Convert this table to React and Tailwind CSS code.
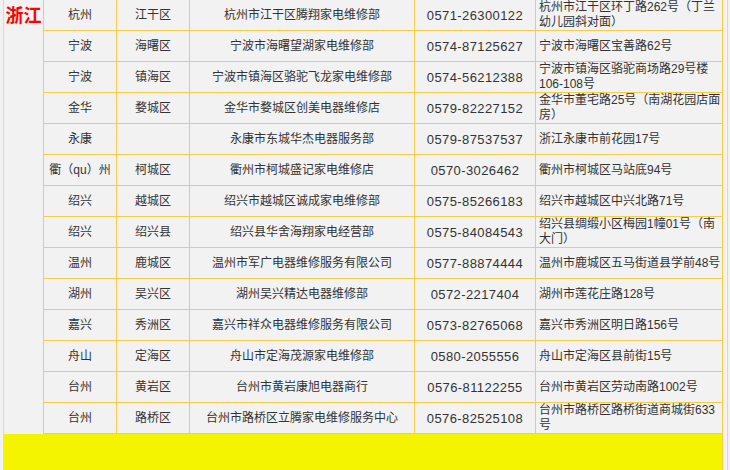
import React from "react";

const rows = [
  ["杭州", "江干区", "杭州市江干区腾翔家电维修部", "0571-26300122", "杭州市江干区环丁路262号（丁兰幼儿园斜对面）"],
  ["宁波", "海曙区", "宁波市海曙望湖家电维修部", "0574-87125627", "宁波市海曙区宝善路62号"],
  ["宁波", "镇海区", "宁波市镇海区骆驼飞龙家电维修部", "0574-56212388", "宁波市镇海区骆驼商场路29号楼106-108号"],
  ["金华", "婺城区", "金华市婺城区创美电器维修店", "0579-82227152", "金华市董宅路25号（南湖花园店面房）"],
  ["永康", "", "永康市东城华杰电器服务部", "0579-87537537", "浙江永康市前花园17号"],
  ["衢（qu）州", "柯城区", "衢州市柯城盛记家电维修店", "0570-3026462", "衢州市柯城区马站底94号"],
  ["绍兴", "越城区", "绍兴市越城区诚成家电维修部", "0575-85266183", "绍兴市越城区中兴北路71号"],
  ["绍兴", "绍兴县", "绍兴县华舍海翔家电经营部", "0575-84084543", "绍兴县绸缎小区梅园1幢01号（南大门）"],
  ["温州", "鹿城区", "温州市军广电器维修服务有限公司", "0577-88874444", "温州市鹿城区五马街道县学前48号"],
  ["湖州", "吴兴区", "湖州吴兴精达电器维修部", "0572-2217404", "湖州市莲花庄路128号"],
  ["嘉兴", "秀洲区", "嘉兴市祥众电器维修服务有限公司", "0573-82765068", "嘉兴市秀洲区明日路156号"],
  ["舟山", "定海区", "舟山市定海茂源家电维修部", "0580-2055556", "舟山市定海区县前街15号"],
  ["台州", "黄岩区", "台州市黄岩康旭电器商行", "0576-81122255", "台州市黄岩区劳动南路1002号"],
  ["台州", "路桥区", "台州市路桥区立腾家电维修服务中心", "0576-82525108", "台州市路桥区路桥街道商城街633号"],
];

const cell = "h-[30px] border-r border-[#f6cd4b] flex items-center justify-center text-center shrink-0";

export default function App() {
  return (
    <div className="w-[730px] h-[470px] overflow-hidden bg-[#f2f2f2] pl-[3px] font-['Liberation_Sans','Noto_Sans_CJK_SC',sans-serif] text-[12px] leading-[15px] text-[#333333]">
      <div className="w-[725px] h-full border-x border-[#d9d9d9] flex flex-col">
        <div className="flex w-[719px]">
          <div className="w-[40px] shrink-0 border-r border-[#f6cd4b] flex justify-center pt-[7px]">
            <span className="text-[18px] leading-[18px] font-bold text-[#ff0000]">浙江</span>
          </div>
          <div className="flex flex-col">
            {rows.map((r, i) => (
              <div key={i} className="flex border-b border-[#f6cd4b]">
                <div className={`${cell} w-[73px]`}>{r[0]}</div>
                <div className={`${cell} w-[73px]`}>{r[1]}</div>
                <div className={`${cell} w-[225px]`}>{r[2]}</div>
                <div className={`${cell} w-[121px] text-[13px] tracking-[0.4px]`}>{r[3]}</div>
                <div className="h-[30px] w-[187px] shrink-0 border-r border-[#f6cd4b] flex items-center pl-[3px] text-left">
                  <span>{r[4]}</span>
                </div>
              </div>
            ))}
          </div>
        </div>
        <div className="w-[719px] flex-1 bg-[#f4f400] border-r border-[#f6cd4b]" />
      </div>
    </div>
  );
}
